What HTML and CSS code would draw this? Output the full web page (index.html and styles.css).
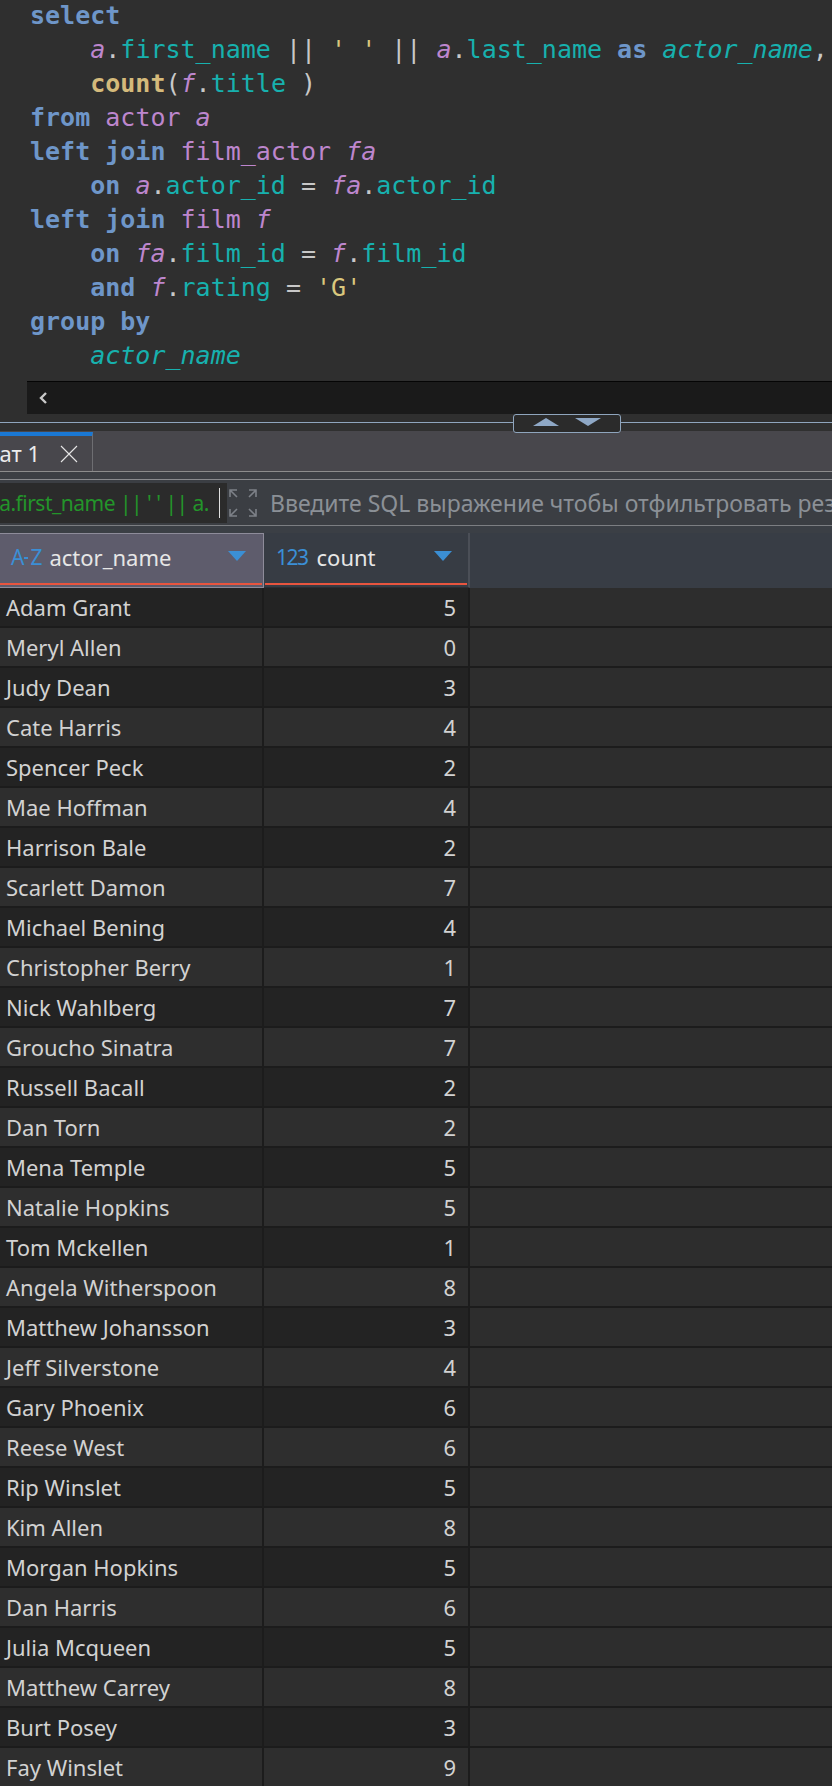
FILE: index.html
```html
<!DOCTYPE html>
<html>
<head>
<meta charset="utf-8">
<link rel="stylesheet" href="styles.css">
</head>
<body>
<div class="editor">
<pre class="code"><span class="kw">select</span>
    <span class="al">a</span>.<span class="id">first_name</span> || <span class="str">' '</span> || <span class="al">a</span>.<span class="id">last_name</span> <span class="kw">as</span> <span class="id it">actor_name</span>,
    <span class="fn">count</span>(<span class="al">f</span>.<span class="id">title</span> )
<span class="kw">from</span> <span class="tb">actor</span> <span class="al">a</span>
<span class="kw">left join</span> <span class="tb">film_actor</span> <span class="al">fa</span>
    <span class="kw">on</span> <span class="al">a</span>.<span class="id">actor_id</span> = <span class="al">fa</span>.<span class="id">actor_id</span>
<span class="kw">left join</span> <span class="tb">film</span> <span class="al">f</span>
    <span class="kw">on</span> <span class="al">fa</span>.<span class="id">film_id</span> = <span class="al">f</span>.<span class="id">film_id</span>
    <span class="kw">and</span> <span class="al">f</span>.<span class="id">rating</span> = <span class="str">'G'</span>
<span class="kw">group by</span>
    <span class="id it">actor_name</span></pre>
<div class="hscroll"><svg class="chev" width="11" height="14" viewBox="0 0 11 14"><path d="M8 2 L3 7 L8 12" fill="none" stroke="#c9c9c9" stroke-width="2.4"/></svg></div>
</div>
<div class="splitter">
  <div class="split-line"></div>
  <div class="handle">
    <svg width="26" height="8" viewBox="0 0 26 8"><polygon points="13,0 26,8 0,8" fill="#8fa8c6"/></svg>
    <svg width="26" height="8" viewBox="0 0 26 8"><polygon points="0,0 26,0 13,8" fill="#8fa8c6"/></svg>
  </div>
</div>
<div class="tabbar">
  <div class="tab">
    <span class="tab-label">Результат 1</span>
    <svg class="close" width="18" height="18" viewBox="0 0 18 18"><path d="M1 1 L17 17 M17 1 L1 17" stroke="#e6e6e6" stroke-width="1.1" fill="none"/></svg>
  </div>
</div>
<div class="band1"></div>
<div class="filterbar">
  <div class="filter-input"><span class="filter-text">a.first_name || ' ' || a.</span><span class="cursor"></span></div>
  <svg class="expand" width="30" height="30" viewBox="0 0 30 30" fill="none" stroke="#7d8188" stroke-width="1.6">
    <path d="M2 9 V2 H9 M2 2 L9 9"/>
    <path d="M21 2 H28 V9 M28 2 L21 9"/>
    <path d="M2 21 V28 H9 M2 28 L9 21"/>
    <path d="M28 21 V28 H21 M28 28 L21 21"/>
  </svg>
  <span class="placeholder">Введите SQL выражение чтобы отфильтровать результаты</span>
</div>
<div class="band2"></div>
<div class="grid">
  <div class="head">
    <div class="hcell hname">
      <div class="hlabel"><span class="type">A<span class="dash"></span>Z</span><span class="htext">actor_name</span><span class="tri"></span></div>
      <div class="uline"></div>
    </div>
    <div class="hcell hcount">
      <div class="hlabel"><span class="type num">123</span><span class="htext">count</span><span class="tri"></span></div>
      <div class="uline"></div>
    </div>
    <div class="hfill"></div>
  </div>
  <div class="row"><div class="c1">Adam Grant</div><div class="c2">5</div><div class="cf"></div></div>
  <div class="row"><div class="c1">Meryl Allen</div><div class="c2">0</div><div class="cf"></div></div>
  <div class="row"><div class="c1">Judy Dean</div><div class="c2">3</div><div class="cf"></div></div>
  <div class="row"><div class="c1">Cate Harris</div><div class="c2">4</div><div class="cf"></div></div>
  <div class="row"><div class="c1">Spencer Peck</div><div class="c2">2</div><div class="cf"></div></div>
  <div class="row"><div class="c1">Mae Hoffman</div><div class="c2">4</div><div class="cf"></div></div>
  <div class="row"><div class="c1">Harrison Bale</div><div class="c2">2</div><div class="cf"></div></div>
  <div class="row"><div class="c1">Scarlett Damon</div><div class="c2">7</div><div class="cf"></div></div>
  <div class="row"><div class="c1">Michael Bening</div><div class="c2">4</div><div class="cf"></div></div>
  <div class="row"><div class="c1">Christopher Berry</div><div class="c2">1</div><div class="cf"></div></div>
  <div class="row"><div class="c1">Nick Wahlberg</div><div class="c2">7</div><div class="cf"></div></div>
  <div class="row"><div class="c1">Groucho Sinatra</div><div class="c2">7</div><div class="cf"></div></div>
  <div class="row"><div class="c1">Russell Bacall</div><div class="c2">2</div><div class="cf"></div></div>
  <div class="row"><div class="c1">Dan Torn</div><div class="c2">2</div><div class="cf"></div></div>
  <div class="row"><div class="c1">Mena Temple</div><div class="c2">5</div><div class="cf"></div></div>
  <div class="row"><div class="c1">Natalie Hopkins</div><div class="c2">5</div><div class="cf"></div></div>
  <div class="row"><div class="c1">Tom Mckellen</div><div class="c2">1</div><div class="cf"></div></div>
  <div class="row"><div class="c1">Angela Witherspoon</div><div class="c2">8</div><div class="cf"></div></div>
  <div class="row"><div class="c1">Matthew Johansson</div><div class="c2">3</div><div class="cf"></div></div>
  <div class="row"><div class="c1">Jeff Silverstone</div><div class="c2">4</div><div class="cf"></div></div>
  <div class="row"><div class="c1">Gary Phoenix</div><div class="c2">6</div><div class="cf"></div></div>
  <div class="row"><div class="c1">Reese West</div><div class="c2">6</div><div class="cf"></div></div>
  <div class="row"><div class="c1">Rip Winslet</div><div class="c2">5</div><div class="cf"></div></div>
  <div class="row"><div class="c1">Kim Allen</div><div class="c2">8</div><div class="cf"></div></div>
  <div class="row"><div class="c1">Morgan Hopkins</div><div class="c2">5</div><div class="cf"></div></div>
  <div class="row"><div class="c1">Dan Harris</div><div class="c2">6</div><div class="cf"></div></div>
  <div class="row"><div class="c1">Julia Mcqueen</div><div class="c2">5</div><div class="cf"></div></div>
  <div class="row"><div class="c1">Matthew Carrey</div><div class="c2">8</div><div class="cf"></div></div>
  <div class="row"><div class="c1">Burt Posey</div><div class="c2">3</div><div class="cf"></div></div>
  <div class="row"><div class="c1">Fay Winslet</div><div class="c2">9</div><div class="cf"></div></div>
</div>
</body>
</html>
```
FILE: styles.css
```css
html, body {
  margin: 0;
  padding: 0;
}
body {
  width: 832px;
  height: 1786px;
  overflow: hidden;
  background: #2d2d2d;
  font-family: "Noto Sans", "Open Sans", sans-serif;
}

/* editor */
.editor {
  background: #2f2f2f;
  height: 422px;
  display: flex;
  flex-direction: column;
  overflow: hidden;
}
.code {
  margin: -1px 0 0 0;
  height: 382px;
  padding: 0 0 0 30px;
  font-family: "DejaVu Sans Mono", monospace;
  font-size: 25px;
  line-height: 34px;
  color: #c8c8c8;
  white-space: pre;
  overflow: hidden;
}
.kw { color: #6e96c9; font-weight: bold; }
.id { color: #17b1ae; }
.it { font-style: italic; }
.al { color: #bd86cd; font-style: italic; }
.tb { color: #bd86cd; }
.fn { color: #d4ba7b; font-weight: bold; }
.str { color: #d9c77d; }

.hscroll {
  margin-left: 27px;
  height: 32px;
  border-top: 1px solid #050505;
  background: #1a1a1a;
  display: flex;
  align-items: center;
  padding-left: 11px;
}
.chev { display: block; }

/* splitter */
.splitter {
  height: 9px;
  background: #303030;
  position: relative;
}
.split-line {
  height: 1px;
  background: #8fa5bd;
}
.handle {
  position: absolute;
  left: 513px;
  top: -8px;
  width: 106px;
  height: 14px;
  border: 1px solid #8fa5bd;
  border-radius: 3px;
  background: #2b2b2b;
  display: flex;
  justify-content: center;
  align-items: flex-start;
  gap: 16px;
  padding-top: 3px;
  box-sizing: content-box;
}
.handle svg { display: block; }

/* tabs */
.tabbar {
  height: 40px;
  background: #48474c;
  border-bottom: 1px solid #8d8d8d;
  display: flex;
  align-items: flex-end;
}
.tab {
  width: 92px;
  height: 35px;
  border-top: 4px solid #1a78d4;
  border-right: 1px solid #6e6e72;
  background: #48474c;
  display: flex;
  justify-content: flex-end;
  align-items: center;
  gap: 20px;
  padding-right: 14px;
  box-sizing: content-box;
  margin-right: auto;
  margin-left: -14px;
}
.tab-label {
  font-size: 22px;
  color: #ececec;
  white-space: nowrap;
  margin-top: -2px;
}
.close { flex: none; display: block; }

.band1 {
  height: 7px;
  background: #3c3f44;
  border-bottom: 1px solid #8a8b8e;
}

/* filter */
.filterbar {
  height: 45px;
  background: #3b3e43;
  border-bottom: 1px solid #7c7e82;
  display: flex;
  align-items: center;
  overflow: hidden;
}
.filter-input {
  width: 227px;
  height: 40px;
  background: #2b2b2b;
  display: flex;
  align-items: center;
  justify-content: flex-end;
  padding-right: 7px;
  box-sizing: border-box;
  flex: none;
  overflow: hidden;
}
.filter-text {
  font-size: 21px;
  color: #23952a;
  white-space: nowrap;
  letter-spacing: -0.5px;
  flex: none;
}
.cursor {
  flex: none;
  width: 1px;
  height: 30px;
  background: #e0e0e0;
  margin-left: 10px;
}
.expand {
  flex: none;
  margin-left: 1px;
  display: block;
}
.placeholder {
  margin-left: 12px;
  font-size: 23px;
  color: #8b9096;
  white-space: nowrap;
}
.band2 {
  height: 7px;
  background: #3b3f45;
}

/* grid */
.grid {
  display: flex;
  flex-direction: column;
}
.head {
  height: 55px;
  display: flex;
  background: #383d45;
}
.hcell {
  display: flex;
  flex-direction: column;
  box-sizing: border-box;
}
.hname {
  width: 264px;
  background: #5e5c6c;
  border-top: 1px solid #8e8c9a;
  border-right: 1px solid #8e8c9a;
  border-bottom: 1px solid #8e8c9a;
}
.hcount {
  width: 206px;
  background: #373c44;
  border-right: 2px solid #4b4f57;
  padding-left: 1px;
  padding-top: 1px;
  border-bottom: 1px solid #2a2d33;
}
.hlabel {
  flex: 1;
  display: flex;
  align-items: center;
  padding-left: 11px;
  padding-right: 17px;
}
.hcount .hlabel { padding-left: 11px; padding-right: 16px; }
.type {
  color: #3b8fd6;
  font-size: 21px;
  letter-spacing: -1px;
  margin-right: 8px;
  margin-top: -4px;
  display: flex;
  align-items: center;
}
.dash {
  display: inline-block;
  width: 4px;
  height: 2px;
  background: #3b8fd6;
  margin: 2px 2px 0 1px;
}
.type.num { letter-spacing: -1.5px; margin-right: 9px; }
.htext {
  font-size: 22px;
  color: #e6e6e6;
  flex: 1;
  margin-top: -4px;
}
.tri {
  width: 0;
  height: 0;
  border-left: 9px solid transparent;
  border-right: 9px solid transparent;
  border-top: 10px solid #3b8fd4;
  margin-top: -5px;
}
.uline {
  height: 2px;
  background: #e8553f;
  margin: 0 1px 2px 0;
}
.hfill { flex: 1; }

.row {
  height: 38px;
  display: flex;
  border-bottom: 2px solid #1c1c1c;
  background: #2e2e2e;
  font-size: 22px;
  color: #d2d2d2;
}
.c1 {
  width: 256px;
  padding-left: 6px;
  border-right: 2px solid #1c1c1c;
  line-height: 38px;
  white-space: nowrap;
}
.c2 {
  width: 192px;
  padding-right: 12px;
  text-align: right;
  border-right: 2px solid #1c1c1c;
  line-height: 38px;
}
.cf { flex: 1; background: #2d2d2d; }
.row:nth-child(even) .c1,
.row:nth-child(even) .c2 { background: #232323; }
.row:nth-child(odd) .c1,
.row:nth-child(odd) .c2 { background: #2e2e2e; }
```
